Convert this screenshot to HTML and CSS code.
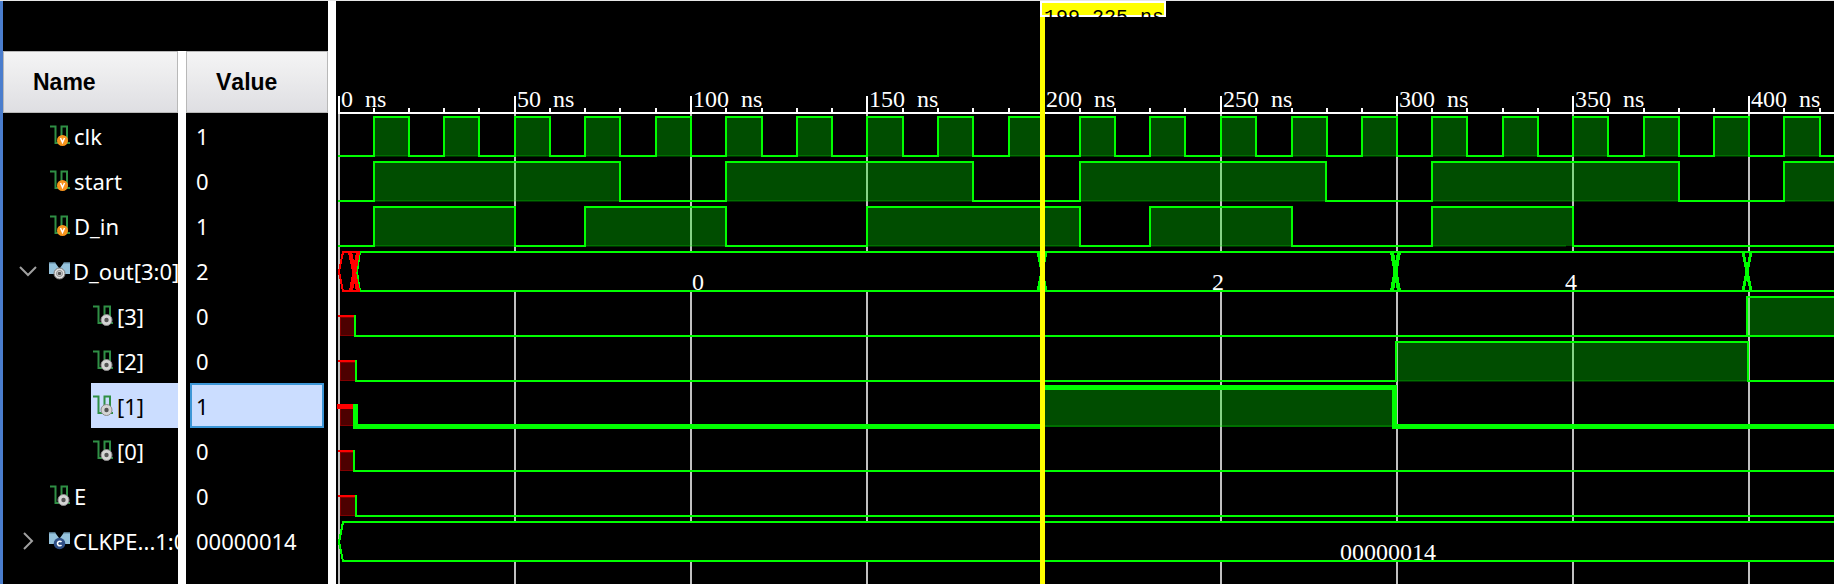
FILE: index.html
```html
<!DOCTYPE html>
<html lang="en">
<head>
<meta charset="utf-8">
<title>Waveform viewer</title>
<link rel="stylesheet" href="styles.css">
</head>
<body>
<svg class="defs" aria-hidden="true">
  <symbol id="wave" viewBox="0 0 20 21">
    <path d="M0 1.5H5.5V18H10" fill="none" stroke="#2f8f45" stroke-width="2"/>
    <path d="M11.5 14V1.5H17V18H20" fill="none" stroke="#2f8f45" stroke-width="2"/>
  </symbol>
  <symbol id="sig-v" viewBox="0 0 20 21">
    <use href="#wave" width="20" height="21"/>
    <circle cx="12.5" cy="15.5" r="5.5" fill="#f7941d"/>
    <path d="M10.5 13L12.5 17.5L14.5 13" fill="none" stroke="#fff" stroke-width="1.5"/>
  </symbol>
  <symbol id="sig-o" viewBox="0 0 20 21">
    <use href="#wave" width="20" height="21"/>
    <circle cx="13.5" cy="15" r="5.5" fill="#d4d4d4" stroke="#8c8c8c"/>
    <circle cx="13.5" cy="15" r="2.2" fill="#555"/>
  </symbol>
  <symbol id="bus" viewBox="0 0 21 18">
    <path d="M0 .5H6L10 6V12H0ZM21 .5H15L11 6V12H21Z" fill="#96c3dc"/>
    <path d="M0 1H6.500M14.500 1H21" stroke="#5f87a0"/>
  </symbol>
  <symbol id="bus-o" viewBox="0 0 21 18">
    <use href="#bus" width="21" height="18"/>
    <circle cx="10.500" cy="11.500" r="5.500" fill="#e0e0e0" stroke="#777"/>
    <circle cx="10.500" cy="11.500" r="3" fill="none" stroke="#888"/>
    <circle cx="10.500" cy="11.500" r="1.800" fill="#555"/>
  </symbol>
  <symbol id="bus-c" viewBox="0 0 21 18">
    <use href="#bus" width="21" height="18"/>
    <circle cx="10.500" cy="11.500" r="5.800" fill="#2f4f86"/>
    <path d="M12.500 10A2.300 2.300 0 1 0 12.500 13" fill="none" stroke="#fff" stroke-width="1.500"/>
  </symbol>
</svg>
<main class="viewer">
  <section class="signals">
    <table class="signal-table">
      <thead>
        <tr><th class="col-name" scope="col">Name</th><th class="col-value" scope="col">Value</th></tr>
      </thead>
      <tbody>
        <tr><td><div class="name"><svg class="icon"><use href="#sig-v"/></svg>clk</div></td><td><div class="value">1</div></td></tr>
        <tr><td><div class="name"><svg class="icon"><use href="#sig-v"/></svg>start</div></td><td><div class="value">0</div></td></tr>
        <tr><td><div class="name"><svg class="icon"><use href="#sig-v"/></svg>D_in</div></td><td><div class="value">1</div></td></tr>
        <tr><td><div class="name parent"><button class="toggle" aria-label="Collapse D_out" aria-expanded="true"><svg class="chevron" viewBox="0 0 18 18"><path d="M1 5L9 13L17 5"/></svg></button><svg class="icon bus"><use href="#bus-o"/></svg>D_out[3:0]</div></td><td><div class="value">2</div></td></tr>
        <tr><td><div class="name child"><svg class="icon"><use href="#sig-o"/></svg>[3]</div></td><td><div class="value">0</div></td></tr>
        <tr><td><div class="name child"><svg class="icon"><use href="#sig-o"/></svg>[2]</div></td><td><div class="value">0</div></td></tr>
        <tr class="selected"><td><div class="name child"><svg class="icon"><use href="#sig-o"/></svg>[1]</div></td><td><div class="value">1</div></td></tr>
        <tr><td><div class="name child"><svg class="icon"><use href="#sig-o"/></svg>[0]</div></td><td><div class="value">0</div></td></tr>
        <tr><td><div class="name"><svg class="icon"><use href="#sig-o"/></svg>E</div></td><td><div class="value">0</div></td></tr>
        <tr><td><div class="name parent"><button class="toggle" aria-label="Expand CLKPERIOD" aria-expanded="false"><svg class="chevron" viewBox="0 0 18 18"><path d="M5 1L13 9L5 17"/></svg></button><svg class="icon bus"><use href="#bus-c"/></svg>CLKPE...1:0</div></td><td><div class="value">00000014</div></td></tr>
      </tbody>
    </table>
    <div class="filler"></div>
  </section>
  <svg class="waves" role="img" aria-label="Signal waveforms">
    <path class="grid" d="M3 113V4000M179 113V4000M355 113V4000M531 113V4000M708 113V4000M885 113V4000M1061 113V4000M1237 113V4000M1413 113V4000"/>
    <path class="axis" d="M2 112H4000M3 95V112M179 95V112M355 95V112M531 95V112M708 95V112M885 95V112M1061 95V112M1237 95V112M1413 95V112"/>
    <path class="axis" d="M38 107V112M73 107V112M108 107V112M143 107V112M214 107V112M249 107V112M284 107V112M320 107V112M390 107V112M426 107V112M461 107V112M496 107V112M567 107V112M602 107V112M637 107V112M673 107V112M744 107V112M779 107V112M814 107V112M849 107V112M920 107V112M956 107V112M991 107V112M1026 107V112M1096 107V112M1131 107V112M1167 107V112M1202 107V112M1272 107V112M1308 107V112M1343 107V112M1378 107V112M1448 107V112M1484 107V112"/>
    <g class="label">
      <text x="5" y="106">0  ns</text>
      <text x="181" y="106">50  ns</text>
      <text x="357" y="106">100  ns</text>
      <text x="533" y="106">150  ns</text>
      <text x="710" y="106">200  ns</text>
      <text x="887" y="106">250  ns</text>
      <text x="1063" y="106">300  ns</text>
      <text x="1239" y="106">350  ns</text>
      <text x="1415" y="106">400  ns</text>
    </g>

    <!-- clk -->
    <g transform="translate(0 116)">
      <path class="floor" d="M3 39H1500"/>
      <path class="high" d="M2 39H38V0H73V39H108V0H143V39H179V0H214V39H249V0H284V39H320V0H355V39H390V0H426V39H461V0H496V39H531V0H567V39H602V0H637V39H673V0H708V39H744V0H779V39H814V0H849V39H885V0H920V39H956V0H991V39H1026V0H1061V39H1096V0H1131V39H1167V0H1202V39H1237V0H1272V39H1308V0H1343V39H1378V0H1413V39H1448V0H1484V39H4000"/>
    </g>
    <!-- start -->
    <g transform="translate(0 161)">
      <path class="floor" d="M3 39H1500"/>
      <path class="high" d="M2 39H38V0H284V39H390V0H637V39H744V0H990V39H1096V0H1343V39H1448V0H1695V39H4000"/>
    </g>
    <!-- D_in -->
    <g transform="translate(0 206)">
      <path class="floor" d="M3 39H1230"/>
      <path class="high" d="M2 39H38V0H179V39H249V0H390V39H531V0H744V39H814V0H956V39H1096V0H1237V39H4000"/>
    </g>
    <!-- D_out -->
    <g transform="translate(0 251)">
      <rect class="bus-body" x="5" y="0" width="4000" height="39"/>
      <path class="wire" d="M4000 0H24L21 20L24 39H4000"/>
      <path class="unknown" d="M24 0H7L3 20L7 39H24"/>
      <path class="unknown cross-wide" d="M14 0L22 39M22 0L15 39"/>
      <path class="wire cross" d="M702 0L710 39M710 0L702 39M1407 0L1415 39M1415 0L1407 39"/>
      <path class="wire cross-wide" d="M1056 0L1063 39M1063 0L1056 39"/>
    </g>
    <!-- D_out[3] -->
    <g transform="translate(0 296)">
      <rect class="unknown-body" x="4" y="20" width="14" height="18"/>
      <path class="unknown" d="M2 19H18"/>
      <path class="high" d="M1411 39V0H4000V39Z"/>
      <path class="wire" d="M19 18V39H1411"/>
    </g>
    <!-- D_out[2] -->
    <g transform="translate(0 341)">
      <rect class="unknown-body" x="4" y="20" width="15" height="18"/>
      <path class="unknown" d="M2 19H19"/>
      <path class="area" d="M1060 39V0H1412V39"/>
      <path class="floor" d="M1062 39H1411"/>
      <path class="wire" d="M20 18V39H1060V0H1412V39H4000"/>
    </g>
    <!-- D_out[1] -->
    <g transform="translate(0 386)">
      <rect class="unknown-body" x="4" y="20" width="13" height="18"/>
      <path class="unknown bold" d="M1 19.500H17"/>
      <path class="area" d="M706 40V0H1058V40"/>
      <path class="floor" d="M708 39H1057"/>
      <path class="wire bold" d="M19.500 17V39.500H706.500V.5H1058.500V39.500H4000"/>
    </g>
    <!-- D_out[0] -->
    <g transform="translate(0 431)">
      <rect class="unknown-body" x="4" y="20" width="13" height="18"/>
      <path class="unknown" d="M2 19H17"/>
      <path class="wire" d="M18 18V39H4000"/>
    </g>
    <!-- E -->
    <g transform="translate(0 476)">
      <rect class="unknown-body" x="4" y="20" width="15" height="18"/>
      <path class="unknown" d="M2 19H19"/>
      <path class="wire" d="M20 18V39H4000"/>
    </g>
    <!-- CLKPERIOD -->
    <g transform="translate(0 521)">
      <rect class="bus-body" x="5" y="0" width="4000" height="39"/>
      <path class="wire" d="M4000 0H7L3 20L7 39H4000"/>
    </g>
    <g class="label">
      <text x="356" y="289">0</text>
      <text x="876" y="289">2</text>
      <text x="1229" y="289">4</text>
      <text x="1004" y="559">00000014</text>
    </g>

    <!-- time cursor -->
    <rect class="cursor" x="704" y="16" width="5" height="4000"/>
    <rect class="flag" x="705" y="1" width="124" height="14"/>
    <text class="flag-text" x="708" y="22">199.225 ns</text>
  </svg>
</main>
</body>
</html>
```

FILE: styles.css
```css
* {
  box-sizing: border-box;
}

body {
  margin: 0;
  background: #000;
  color: #fff;
  font-family: "Noto Sans", "Open Sans", sans-serif;
  font-size: 22px;
}

.defs {
  position: absolute;
  width: 0;
  height: 0;
}

.viewer {
  display: flex;
  height: 100vh;
  overflow: hidden;
  border-top: 1px solid #e6e6e6;
}

.signals {
  display: flex;
  flex-direction: column;
  flex: none;
  width: 336px;
  padding-top: 50px;
  border-left: 3px solid #4a7dcd;
  border-right: 8px solid #fff;
}

.signal-table {
  width: 100%;
  table-layout: fixed;
  border-spacing: 0;
}

th,
td {
  padding: 0;
}

th {
  height: 62px;
  background: linear-gradient(#f5f5f5, #dedee2);
  background-clip: padding-box;
  box-shadow: inset 0 0 0 1px #b8b8b8;
  color: #000;
  font-family: "Liberation Sans", Arial, sans-serif;
  font-size: 23px;
  font-weight: bold;
  font-kerning: none;
  text-align: left;
}

.col-name {
  width: 183px;
  padding-left: 30px;
}

.col-value {
  padding-left: 30px;
}

th:first-child,
td:first-child,
.filler {
  border-right: 8px solid #fff;
}

.filler {
  flex: 1;
  width: 183px;
}

.name {
  display: flex;
  align-items: center;
  height: 45px;
  padding-left: 47px;
  overflow: hidden;
  white-space: nowrap;
}

.parent {
  padding-left: 16px;
}

.child {
  margin-left: 88px;
  padding-left: 2px;
}

.value {
  height: 45px;
  padding-left: 10px;
  line-height: 46px;
}

.icon {
  flex: none;
  width: 20px;
  height: 21px;
  margin-right: 4px;
}

.icon.bus {
  width: 21px;
  height: 18px;
  margin-right: 3px;
}

.toggle {
  display: flex;
  flex: none;
  width: 18px;
  margin-right: 12px;
  padding: 0;
  border: 0;
  background: none;
}

.chevron {
  width: 18px;
  height: 18px;
  fill: none;
  stroke: #a0a0a0;
  stroke-width: 2;
}

.selected .name,
.selected .value {
  background: #cbddff;
  color: #000;
}

.selected .value {
  margin: 0 4px;
  padding-left: 4px;
  border: 2px solid #3d96d6;
  line-height: 42px;
}

.waves {
  flex: 1;
  min-width: 0;
  height: 100%;
  shape-rendering: crispEdges;
}

.waves path {
  fill: none;
  stroke-width: 2;
}

.waves .grid {
  stroke: #c0c0c0;
}

.waves .axis {
  stroke: #fff;
}

.waves .high {
  fill: rgba(0, 255, 0, 0.3);
  stroke: #0f0;
}

.waves .area {
  fill: rgba(0, 255, 0, 0.3);
}

.waves .floor {
  stroke: rgba(0, 255, 0, 0.2);
}

.waves .wire {
  stroke: #0f0;
}

.waves .unknown {
  stroke: #f00;
}

.waves .cross {
  stroke-width: 3;
}

.waves .cross-wide {
  stroke-width: 4;
}

.waves .bold {
  stroke-width: 5;
}

.bus-body {
  fill: #000;
}

.unknown-body {
  fill: #4d0000;
  stroke: #800000;
}

.label text {
  font-family: "Liberation Serif", "Times New Roman", serif;
  font-size: 24px;
  white-space: pre;
}

.label {
  fill: #fff;
}

.cursor {
  fill: #ff0;
}

.flag {
  fill: #ff0;
  stroke: #fff;
  stroke-width: 2;
}

.flag-text {
  fill: #000;
  font-family: "Liberation Mono", "Courier New", monospace;
  font-size: 20px;
}
```
